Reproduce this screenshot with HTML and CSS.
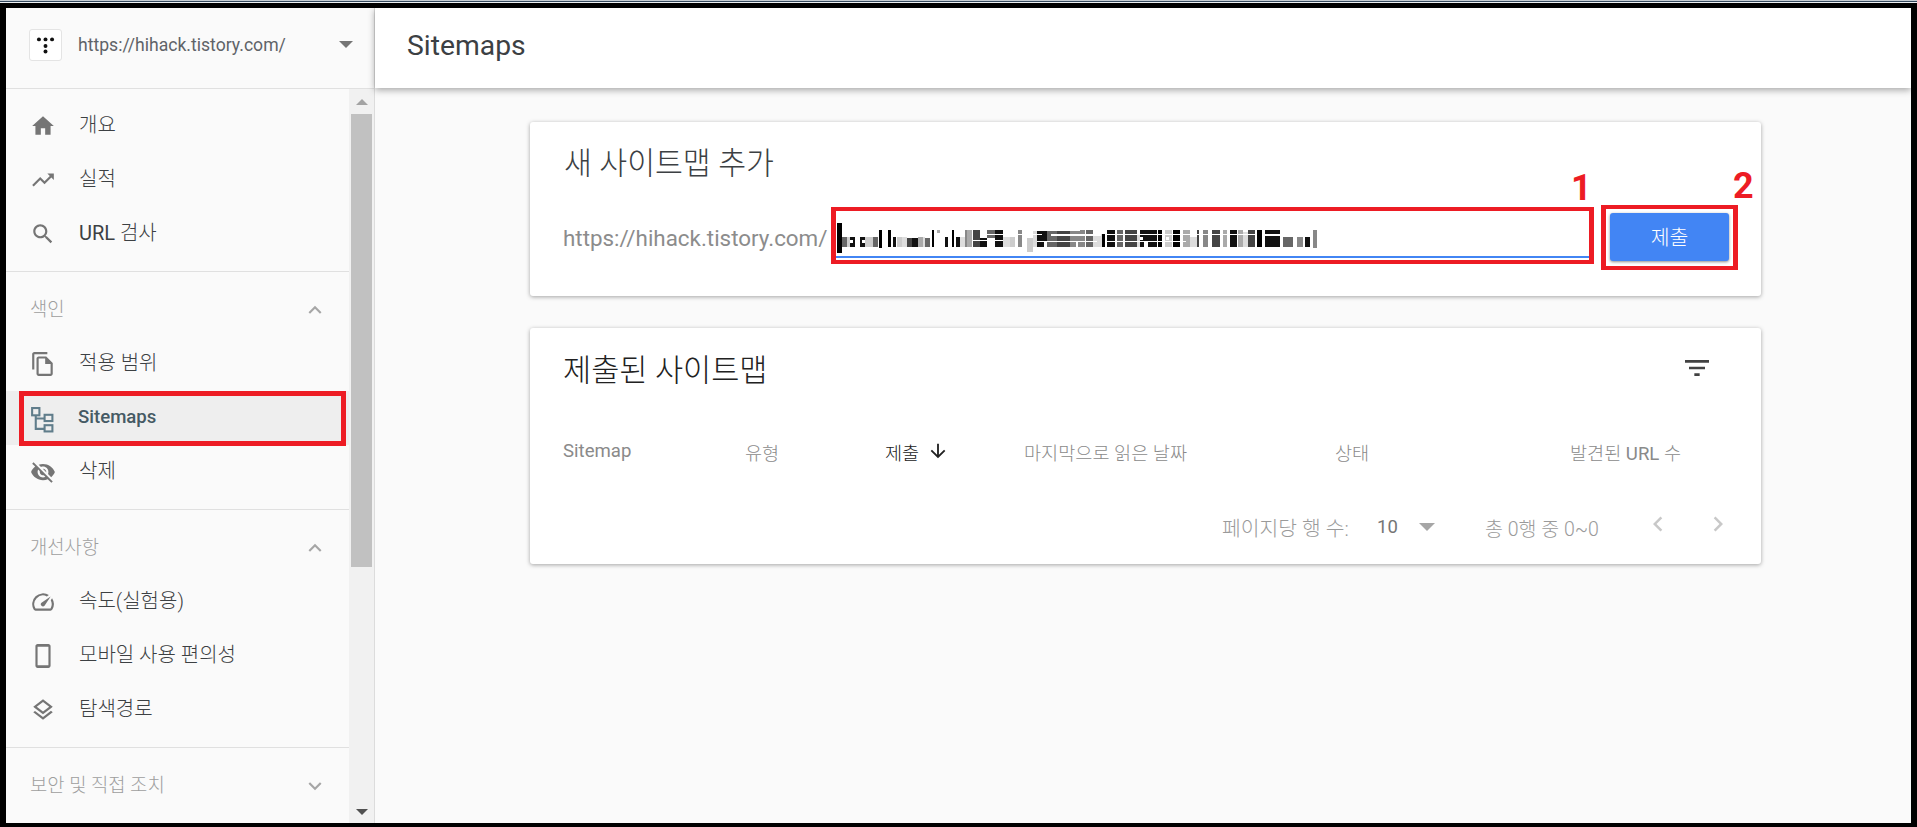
FILE: index.html
```html
<!DOCTYPE html>
<html lang="ko">
<head>
    <meta charset="UTF-8">
    <title>Sitemaps</title>
    <link rel="stylesheet" href="styles.css">
</head>
<body>
    <div class="topline"></div>
    <div class="frame">
        <!-- 사이드바 -->
        <aside class="sidebar">
            <div class="site-picker">
                <svg class="site-logo" viewBox="0 0 33 32">
                    <circle cx="9.5" cy="10" r="2.1"/><circle cx="16.5" cy="10" r="2.1"/><circle cx="23.5" cy="10" r="2.1"/>
                    <circle cx="16.5" cy="17" r="2.1"/><circle cx="16.5" cy="23" r="2.1"/>
                </svg>
                <span class="site-url">https://hihack.tistory.com/</span>
                <span class="caret caret-picker"></span>
            </div>
            <div class="nav-wrap">
                <nav class="nav">
                    <div class="nav-group">
                        <div class="nav-item">
                            <svg class="nav-icon" viewBox="0 0 24 24"><path d="M10 20v-6h4v6h5v-8h3L12 3 2 12h3v8z"/></svg>
                            <span>개요</span>
                        </div>
                        <div class="nav-item">
                            <svg class="nav-icon" viewBox="0 0 24 24"><path d="M16 6l2.29 2.29-4.88 4.88-4-4L2 16.59 3.41 18l6-6 4 4 6.3-6.29L22 12V6z"/></svg>
                            <span>실적</span>
                        </div>
                        <div class="nav-item">
                            <svg class="nav-icon" viewBox="0 0 24 24"><path d="M15.5 14h-.79l-.28-.27C15.41 12.59 16 11.11 16 9.5 16 5.91 13.09 3 9.5 3S3 5.91 3 9.5 5.91 16 9.5 16c1.61 0 3.09-.59 4.23-1.57l.27.28v.79l5 4.99L20.49 19l-4.99-5zm-6 0C7.01 14 5 11.99 5 9.5S7.01 5 9.5 5 14 7.01 14 9.5 11.99 14 9.5 14z"/></svg>
                            <span><span class="latin">URL</span> 검사</span>
                        </div>
                    </div>
                    <div class="nav-group nav-group-titled">
                        <div class="nav-title">
                            <span>색인</span>
                            <svg class="nav-chevron" viewBox="0 0 24 24"><path d="M12 8l-6 6 1.41 1.41L12 10.83l4.59 4.58L18 14z"/></svg>
                        </div>
                        <div class="nav-item">
                            <svg class="nav-icon" viewBox="0 0 24 24"><path d="M16 1H4c-1.1 0-2 .9-2 2v14h2V3h12V1zm-1 4H8c-1.1 0-1.99.9-1.99 2L6 21c0 1.1.89 2 1.99 2H19c1.1 0 2-.9 2-2V11l-6-6zM8 21V7h6v5h5v9H8z"/></svg>
                            <span>적용 범위</span>
                        </div>
                        <div class="nav-item nav-item-active">
                            <svg class="nav-icon nav-icon-sitemap" viewBox="0 0 25 25">
                                <rect x="3" y="1" width="7" height="7"/>
                                <rect x="15" y="7.5" width="7.5" height="6"/>
                                <rect x="15" y="17.5" width="7.5" height="6"/>
                                <path d="M6.5 8v13H15M6.5 11H15"/>
                            </svg>
                            <span>Sitemaps</span>
                            <div class="mark mark-nav"></div>
                        </div>
                        <div class="nav-item">
                            <svg class="nav-icon" viewBox="0 0 24 24"><path d="M12 7c2.76 0 5 2.24 5 5 0 .65-.13 1.26-.36 1.83l2.92 2.92c1.51-1.26 2.7-2.89 3.43-4.75-1.73-4.39-6-7.5-11-7.5-1.4 0-2.74.25-3.98.7l2.16 2.16C10.74 7.13 11.35 7 12 7zM2 4.27l2.28 2.28.46.46C3.08 8.3 1.78 10.02 1 12c1.73 4.39 6 7.5 11 7.5 1.55 0 3.03-.3 4.38-.84l.42.42L19.73 22 21 20.73 3.27 3 2 4.27zM7.53 9.8l1.55 1.55c-.05.21-.08.43-.08.65 0 1.66 1.34 3 3 3 .22 0 .44-.03.65-.08l1.55 1.55c-.67.33-1.41.53-2.2.53-2.76 0-5-2.24-5-5 0-.79.2-1.53.53-2.2zm4.31-.78l3.15 3.15.02-.16c0-1.66-1.34-3-3-3l-.17.01z"/></svg>
                            <span>삭제</span>
                        </div>
                    </div>
                    <div class="nav-group nav-group-titled">
                        <div class="nav-title">
                            <span>개선사항</span>
                            <svg class="nav-chevron" viewBox="0 0 24 24"><path d="M12 8l-6 6 1.41 1.41L12 10.83l4.59 4.58L18 14z"/></svg>
                        </div>
                        <div class="nav-item">
                            <svg class="nav-icon" viewBox="0 0 24 24"><path d="M20.38 8.57l-1.23 1.85a8 8 0 0 1-.22 7.58H5.07A8 8 0 0 1 15.58 6.85l1.85-1.23A10 10 0 0 0 3.35 19a2 2 0 0 0 1.72 1h13.85a2 2 0 0 0 1.74-1 10 10 0 0 0-.27-10.44zm-9.79 6.84a2 2 0 0 0 2.83 0l5.66-8.49-8.49 5.66a2 2 0 0 0 0 2.83z"/></svg>
                            <span>속도(실험용)</span>
                        </div>
                        <div class="nav-item">
                            <svg class="nav-icon" viewBox="0 0 24 24"><path d="M17 1H7c-1.1 0-2 .9-2 2v18c0 1.1.9 2 2 2h10c1.100 0 2-.9 2-2V3c0-1.100-.9-2-2-2zm0 19.500H7v-17h10z"/></svg>
                            <span>모바일 사용 편의성</span>
                        </div>
                        <div class="nav-item">
                            <svg class="nav-icon" viewBox="0 0 24 24"><path d="M11.99 18.54l-7.37-5.73L3 14.07l9 7 9-7-1.63-1.27zM12 16l7.36-5.73L21 9l-9-7-9 7 1.63 1.27L12 16zm0-11.47L17.74 9 12 13.47 6.26 9 12 4.53z"/></svg>
                            <span>탐색경로</span>
                        </div>
                    </div>
                    <div class="nav-group nav-group-titled">
                        <div class="nav-title">
                            <span>보안 및 직접 조치</span>
                            <svg class="nav-chevron" viewBox="0 0 24 24"><path d="M16.59 8.59L12 13.17 7.41 8.59 6 10l6 6 6-6z"/></svg>
                        </div>
                    </div>
                </nav>
                <div class="scrollbar">
                    <div class="scroll-btn"><span class="scroll-up"></span></div>
                    <div class="scroll-thumb"></div>
                    <div class="scroll-btn scroll-btn-end"><span class="scroll-down"></span></div>
                </div>
            </div>
        </aside>

        <main class="main">
            <header class="topbar">Sitemaps</header>
            <div class="content">
                <!-- 새 사이트맵 추가 -->
                <section class="card card-add">
                    <h2 class="add-title">새 사이트맵 추가</h2>
                    <div class="add-row">
                        <span class="add-prefix">https://hihack.tistory.com/</span>
                        <div class="add-field">
                            <svg class="mosaic" width="490" height="32" viewBox="0 0 490 32">
                                <path fill="#ddd" d="M66 15h5v10h-5zM87 15h2v10h-2zM124 15h5v10h-5zM167 15h7v10h-7zM197 9h4v16h-4zM257 12h9v13h-9zM301 12h3v13h-3zM354 15h7v10h-7zM407 10h5v15h-5z"/>
                                <path fill="#000" d="M1 1h5v30H1zM43 8h3v18h-3zM52 8h3v17h-3zM96 8h2v17h-2zM116 8h2v17h-2zM266 12h3v13h-3zM322 8h4v17h-4zM337 8h7v17h-7zM421 8h5v17h-5z"/>
                                <path fill="#111" d="M14 15h5v10h-5zM24 15h5v10h-5zM57 15h3v10h-3zM76 16h6v9h-6zM109 15h3v10h-3zM120 15h4v10h-4zM144 16h7v9h-7zM159 8h8v17h-8zM201 9h10v16h-10zM271 8h8v17h-8zM304 8h17v17h-17zM394 8h7v17h-7zM429 8h15v17h-15zM469 15h5v10h-5z"/>
                                <path fill="#444" d="M71 16h5v9h-5zM137 8h7v17h-7zM221 9h13v16h-13zM289 8h12v17h-12zM361 8h2v17h-2zM376 8h8v17h-8zM412 8h7v17h-7z"/>
                                <path fill="#666" d="M6 15h5v10H6zM37 15h5v10h-5zM89 16h5v9h-5zM151 8h8v8h-8zM211 9h10v16h-10zM250 8h7v17h-7zM281 8h6v17h-6zM447 15h10v10h-10z"/>
                                <path fill="#888" d="M129 8h2v17h-2zM182 8h4v17h-4zM234 9h10v16h-10zM244 8h5v17h-5zM367 8h5v17h-5zM461 15h6v10h-6zM477 8h4v18h-4z"/>
                                <path fill="#aaa" d="M82 15h5v10h-5zM101 8h3v3h-3zM131 8h5v17h-5zM347 8h7v17h-7zM387 8h4v17h-4zM402 8h5v17h-5z"/>
                                <path fill="#ccc" d="M11 15h3v10h-3zM29 15h8v10h-8zM61 15h5v10h-5zM174 15h5v10h-5zM191 16h6v14h-6zM329 8h7v17h-7z"/>
                                <path fill="#fff" d="M146 12h60v1h-60zM201 19h60v1h-60zM215 12h50v2h-50zM270 12h150v1h-150zM270 19h80v1h-80zM14 18h3v3h-3zM26 18h3v3h-3zM137 18h30v1h-30zM429 12h15v2h-15zM304 15h3v3h-3zM330 15h3v3h-3zM308 20h4v5h-4zM208 20h3v5h-3zM240 20h2v5h-2z"/>
                            </svg>
                        </div>
                        <button class="add-submit">제출</button>
                    </div>
                    <div class="mark mark-field"></div>
                    <div class="mark mark-submit"></div>
                    <span class="mark-num mark-num-1">1</span>
                    <span class="mark-num mark-num-2">2</span>
                </section>

                <!-- 제출된 사이트맵 -->
                <section class="card card-list">
                    <div class="list-head">
                        <h2 class="list-title">제출된 사이트맵</h2>
                        <svg class="list-filter" viewBox="0 0 24 24"><path d="M10 18h4v-2h-4v2zM3 6v2h18V6H3zm3 7h12v-2H6v2z"/></svg>
                    </div>
                    <div class="list-cols">
                        <span class="latin">Sitemap</span>
                        <span>유형</span>
                        <span class="col-sorted">제출
                            <svg class="sort-arrow" viewBox="0 0 24 24"><path d="M20 12l-1.41-1.41L13 16.17V4h-2v12.17l-5.58-5.59L4 12l8 8 8-8z"/></svg>
                        </span>
                        <span>마지막으로 읽은 날짜</span>
                        <span>상태</span>
                        <span>발견된 <span class="latin">URL</span> 수</span>
                    </div>
                    <div class="list-foot">
                        <span class="foot-label">페이지당 행 수:</span>
                        <span class="foot-size">10</span>
                        <span class="foot-caret"><span class="caret caret-size"></span></span>
                        <span class="foot-range">총 0행 중 0~0</span>
                        <svg class="foot-page" viewBox="0 0 24 24"><path d="M15.41 7.41L14 6l-6 6 6 6 1.41-1.41L10.83 12z"/></svg>
                        <svg class="foot-page" viewBox="0 0 24 24"><path d="M10 6L8.59 7.41 13.17 12l-4.58 4.59L10 18l6-6z"/></svg>
                    </div>
                </section>
            </div>
        </main>
    </div>
</body>
</html>
```

FILE: styles.css
```css
/* Genel */
html, body {
    height: 100%;
    margin: 0;
    overflow: hidden;
}

body {
    background: #000;
    font-family: Roboto, "Noto Sans CJK KR", sans-serif;
    color: #3c4043;
}

h2 {
    margin: 0;
    font-weight: 300;
}

.latin {
    font-weight: 400;
}

.topline {
    height: 3px;
    background: linear-gradient(#c5ccd2 0 1px, #34495e 1px 2px, #eef1f3 2px 3px);
}

.frame {
    box-sizing: border-box;
    display: flex;
    height: 824px;
    border-style: solid;
    border-color: #000;
    border-width: 5px 6px 4px 6px;
    background: #fafafa;
}

/* Sidebar */
.sidebar {
    flex: 0 0 368px;
    display: flex;
    flex-direction: column;
    border-right: 1px solid #dcdcdc;
}

.site-picker {
    box-sizing: border-box;
    flex: 0 0 81px;
    display: flex;
    align-items: center;
    padding: 0 21px 7px 23px;
    border-bottom: 1px solid #e0e0e0;
}

.site-logo {
    box-sizing: border-box;
    width: 33px;
    height: 32px;
    background: #fff;
    border: 1px solid #e4e4e4;
    border-radius: 3px;
    fill: #111;
}

.site-url {
    flex: 1;
    margin-left: 16px;
    font-size: 17.6px;
    color: #5f6368;
}

.caret {
    display: block;
    width: 0;
    height: 0;
    border-left: 7px solid transparent;
    border-right: 7px solid transparent;
    border-top: 7px solid #757575;
}

.nav-wrap {
    flex: 1;
    display: flex;
    min-height: 0;
}

.nav {
    flex: 1;
    overflow: hidden;
}

.nav-group {
    padding: 8px 0 12px;
    border-bottom: 1px solid #e0e0e0;
}

.nav-group-titled {
    padding-top: 0;
}

.nav-group:last-child {
    border-bottom: none;
}

.nav-title {
    box-sizing: border-box;
    height: 63px;
    display: flex;
    align-items: center;
    justify-content: space-between;
    padding: 7px 21px 0 24px;
    font-size: 18.8px;
    font-weight: 300;
    color: #9e9e9e;
}

.nav-chevron {
    width: 26px;
    height: 26px;
    margin-top: 5px;
    fill: #a6a6a6;
}

.nav-item {
    position: relative;
    height: 54px;
    display: flex;
    align-items: center;
    padding: 0 0 2px 24px;
    box-sizing: border-box;
    font-size: 20px;
    font-weight: 300;
    color: #3c4043;
}

.nav-icon {
    flex: 0 0 26px;
    height: 26px;
    margin: 6px 23px 0 0;
    fill: #757575;
}

.nav-item-active {
    margin: 2px 0 -2px;
    background: #eee;
    font-weight: 500;
    font-size: 18.6px;
    color: #455a64;
}

.nav-icon-sitemap {
    margin: 6px 23px 0 -1px;
    fill: none;
    stroke: #607d8b;
    stroke-width: 2;
}

/* Kaydırma çubuğu */
.scrollbar {
    flex: 0 0 25px;
    display: flex;
    flex-direction: column;
    background: #f1f1f1;
}

.scroll-btn {
    flex: 0 0 25px;
    display: flex;
    justify-content: center;
    padding-top: 10px;
    box-sizing: border-box;
}

.scroll-btn-end {
    margin-top: auto;
    flex-basis: 20px;
    padding-top: 6px;
}

.scroll-up, .scroll-down {
    width: 0;
    height: 0;
    border-left: 6px solid transparent;
    border-right: 6px solid transparent;
}

.scroll-up {
    border-bottom: 6px solid #a3a3a3;
}

.scroll-down {
    border-top: 6px solid #505050;
}

.scroll-thumb {
    height: 453px;
    margin: 0 2px;
    background: #c1c1c1;
}

/* Ana alan */
.main {
    flex: 1;
    display: flex;
    flex-direction: column;
    min-width: 0;
}

.topbar {
    box-sizing: border-box;
    position: relative;
    flex: 0 0 80px;
    display: flex;
    align-items: center;
    padding: 0 0 6px 32px;
    background: #fff;
    font-size: 28.3px;
    color: #3c4043;
    box-shadow: 0 2px 7px rgba(0, 0, 0, 0.35);
}

.content {
    padding: 34px 150px 0 155px;
}

.card {
    position: relative;
    background: #fff;
    border-radius: 3px;
    box-shadow: 0 1px 4px rgba(0, 0, 0, 0.35);
}

.card-add {
    height: 174px;
    margin-bottom: 32px;
}

.card-list {
    height: 236px;
}

.add-title {
    padding: 24px 0 0 34px;
    font-size: 30.3px;
    line-height: 36px;
    color: #3c4043;
}

.add-row {
    display: flex;
    align-items: flex-start;
    margin-top: 29px;
    padding: 0 32px 0 34px;
}

.add-prefix {
    flex: 0 0 272px;
    margin-top: 2px;
    margin-left: -1px;
    margin-right: 1px;
    font-size: 22.4px;
    line-height: 50px;
    white-space: nowrap;
    color: #8c8c8c;
}

.add-field {
    box-sizing: border-box;
    flex: 1;
    height: 47px;
    padding-top: 11px;
    border-bottom: 2px solid #4285f4;
    background: #fff;
}

.mosaic {
    display: block;
}

.add-submit {
    flex: 0 0 119px;
    height: 48px;
    margin: 2px 0 0 21px;
    padding-bottom: 4px;
    border: none;
    border-radius: 3px;
    background: #4285f4;
    color: #fff;
    font-family: inherit;
    font-size: 20.5px;
    font-weight: 300;
    box-shadow: 0 1px 3px rgba(0, 0, 0, 0.45);
}

/* Kırmızı işaretler */
.mark {
    box-sizing: border-box;
    position: absolute;
    border: solid #ed1c24;
    border-width: 4px 5px;
}

.mark-nav {
    left: 13px;
    top: 0;
    width: 327px;
    height: 55px;
    border-width: 5px;
}

.mark-field {
    left: 301px;
    top: 85px;
    width: 763px;
    height: 57px;
}

.mark-submit {
    left: 1071px;
    top: 83px;
    width: 137px;
    height: 65px;
}

.mark-num {
    position: absolute;
    font-size: 36px;
    font-weight: 700;
    line-height: 40px;
    color: #ed1c24;
}

.mark-num-1 {
    left: 1041px;
    top: 46px;
}

.mark-num-2 {
    left: 1203px;
    top: 44px;
}

/* Liste */
.list-head {
    box-sizing: border-box;
    height: 84px;
    display: flex;
    align-items: center;
    justify-content: space-between;
    padding: 0 48px 0 33px;
}

.list-title {
    margin-bottom: 5px;
    font-size: 30.6px;
    color: #212121;
}

.list-filter {
    width: 32px;
    height: 32px;
    margin-bottom: 4px;
    fill: #424242;
}

.list-cols {
    display: grid;
    grid-template-columns: 182px 140px 139px 311px 235px auto;
    align-items: center;
    height: 44px;
    margin-top: 17px;
    padding-left: 33px;
    font-size: 18.6px;
    font-weight: 300;
    color: #8a8a8a;
}

.col-sorted {
    display: flex;
    align-items: center;
    color: #212121;
}

.sort-arrow {
    width: 22px;
    height: 22px;
    margin-left: 8px;
    fill: #212121;
}

.list-foot {
    display: flex;
    align-items: center;
    height: 40px;
    margin-top: 34px;
    padding-left: 692px;
    font-size: 20.4px;
    font-weight: 300;
    color: #9a9a9a;
}

.foot-label {
    flex: 0 0 155px;
}

.foot-size {
    flex: 0 0 42px;
    font-size: 18.5px;
    font-weight: 400;
    color: #757575;
}

.foot-caret {
    flex: 0 0 66px;
}

.caret-size {
    border-top-color: #a6a6a6;
    border-left-width: 8px;
    border-right-width: 8px;
    border-top-width: 8px;
}

.foot-range {
    flex: 0 0 158px;
    font-size: 19.5px;
}

.foot-page {
    flex: 0 0 30px;
    height: 30px;
    margin: -6px 30px 0 0;
    fill: #c8c8c8;
}
```
